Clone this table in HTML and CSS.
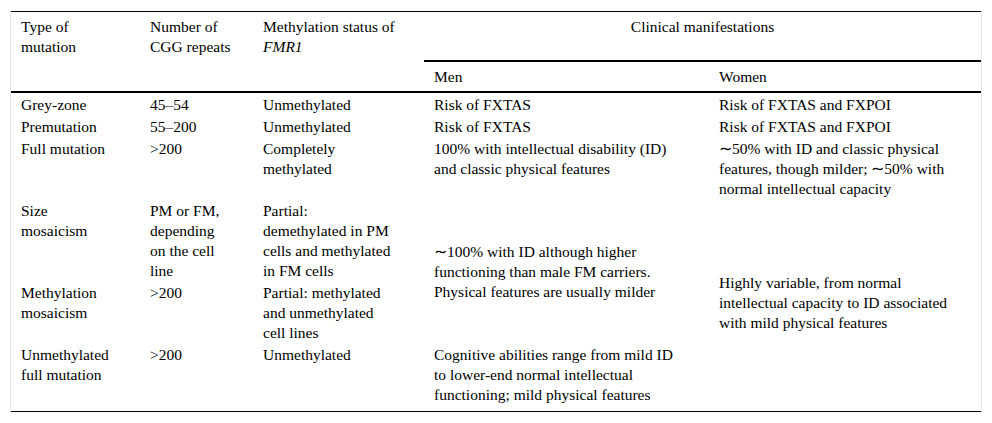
FILE: index.html
```html
<!DOCTYPE html>
<html lang="en">
<head>
<meta charset="utf-8">
<title>FMR1 mutation types</title>
<link rel="stylesheet" href="styles.css">
</head>
<body>
<div class="frame">
  <table class="data">
    <colgroup>
      <col class="w1"><col class="w2"><col class="w3"><col class="w4"><col class="w5">
    </colgroup>
    <thead>
      <tr>
        <th rowspan="2" class="c1 hb">Type of mutation</th>
        <th rowspan="2" class="c2 hb">Number of<br>CGG repeats</th>
        <th rowspan="2" class="c3 hb">Methylation status of<br><i>FMR1</i></th>
        <th colspan="2" class="group">Clinical manifestations</th>
      </tr>
      <tr>
        <th class="c4 sub hb">Men</th>
        <th class="c5 sub hb">Women</th>
      </tr>
    </thead>
    <tbody>
      <tr class="first">
        <td class="c1">Grey-zone</td>
        <td class="c2">45–54</td>
        <td class="c3">Unmethylated</td>
        <td class="c4">Risk of FXTAS</td>
        <td class="c5">Risk of FXTAS and FXPOI</td>
      </tr>
      <tr>
        <td class="c1">Premutation</td>
        <td class="c2">55–200</td>
        <td class="c3">Unmethylated</td>
        <td class="c4">Risk of FXTAS</td>
        <td class="c5">Risk of FXTAS and FXPOI</td>
      </tr>
      <tr>
        <td class="c1">Full mutation</td>
        <td class="c2">&gt;200</td>
        <td class="c3">Completely<br>methylated</td>
        <td class="c4">100% with intellectual disability (ID) and classic physical features</td>
        <td class="c5">∼50% with ID and classic physical features, though milder; ∼50% with normal intellectual capacity</td>
      </tr>
      <tr>
        <td class="c1">Size mosaicism</td>
        <td class="c2">PM or FM,<br>depending<br>on the cell<br>line</td>
        <td class="c3">Partial:<br>demethylated in PM<br>cells and methylated<br>in FM cells</td>
        <td class="c4 mid" rowspan="2">∼100% with ID although higher functioning than male FM carriers. Physical features are usually milder</td>
        <td class="c5 mid" rowspan="3">Highly variable, from normal intellectual capacity to ID associated with mild physical features</td>
      </tr>
      <tr>
        <td class="c1">Methylation mosaicism</td>
        <td class="c2">&gt;200</td>
        <td class="c3">Partial: methylated<br>and unmethylated<br>cell lines</td>
      </tr>
      <tr>
        <td class="c1">Unmethylated full mutation</td>
        <td class="c2">&gt;200</td>
        <td class="c3">Unmethylated</td>
        <td class="c4">Cognitive abilities range from mild ID to lower-end normal intellectual functioning; mild physical features</td>
      </tr>
    </tbody>
  </table>
</div>
</body>
</html>
```

FILE: styles.css
```css
html, body {
  margin: 0;
  padding: 0;
  background: #ffffff;
}

body {
  font-family: "Liberation Serif", "Times New Roman", serif;
  font-size: 15.5px;
  line-height: 20px;
  color: #000000;
}

.frame {
  margin: 11px 0 0 10px;
  width: 970px;
  border-left: 1px solid #e4e4e4;
  border-right: 1px solid #e4e4e4;
}

.data {
  width: 970px;
  table-layout: fixed;
  border-collapse: separate;
  border-spacing: 0;
  border-top: 1px solid #000;
  border-bottom: 1px solid #000;
  padding-bottom: 5px;
}

.w1 { width: 129px; }
.w2 { width: 113px; }
.w3 { width: 171px; }
.w4 { width: 285px; }
.w5 { width: 272px; }

.data th,
.data td {
  font-weight: normal;
  text-align: left;
  vertical-align: top;
  padding-top: 1px;
  padding-bottom: 1px;
  padding-left: 10px;
}

.c1 { padding-right: 27px; }
.c2 { padding-right: 13px; }
.c3 { padding-right: 21px; }
.c4 { padding-right: 30px; }
.c5 { padding-right: 22px; }

.data thead th {
  padding-top: 5px;
}

.data th.group {
  text-align: center;
  padding: 5px 0 23px 0;
  border-bottom: 2px solid #000;
}

.data th.sub {
  padding-bottom: 4px;
}

.data th.hb {
  border-bottom: 2px solid #000;
}

.data i {
  font-style: italic;
}

.data td.mid {
  vertical-align: middle;
}

.data tr.first td {
  padding-top: 2px;
}
```
